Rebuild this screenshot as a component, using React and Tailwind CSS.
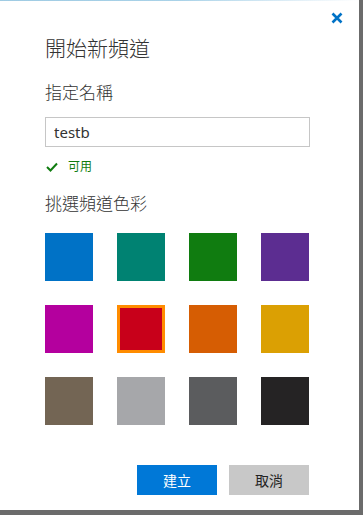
import React, { useState } from "react";

const colors = [
  "#0072c6",
  "#008272",
  "#107c10",
  "#5c2d91",
  "#b4009e",
  "#c8001a",
  "#d65d03",
  "#dba003",
  "#736554",
  "#a6a7aa",
  "#5b5c5e",
  "#252324",
];

const font = {
  fontFamily: "'Noto Sans', 'Noto Sans CJK TC', sans-serif",
};

const App = () => {
  const [name, setName] = useState("testb");
  const [selected, setSelected] = useState(5);

  return (
    <div className="w-[363px] h-[515px] bg-[#6b6b6b]" style={font}>
      <div className="w-[359px] h-[510px] bg-white flex flex-col">
        {/* top accent line */}
        <div className="h-px bg-gradient-to-r from-[#9fcbe3] via-[#a9d2e8] to-white" />

        <div className="flex justify-end pr-[15px] pt-[10px]">
          {/* Close */}
          <button className="w-[14px] h-[14px] flex items-center justify-center">
            <svg viewBox="0 0 12 12" className="w-[12px] h-[12px]">
              <path
                d="M1.5 1.5 L10.5 10.5 M10.5 1.5 L1.5 10.5"
                stroke="#0072c6"
                strokeWidth="2.6"
                strokeLinecap="butt"
              />
            </svg>
          </button>
        </div>

        <div className="pl-[45px] pr-[49px]">
          <h1 className="text-[21px] leading-[28px] text-[#333] font-light mt-[9px]">
            開始新頻道
          </h1>

          <div className="text-[17px] leading-[22px] text-[#333] font-light mt-[20px]">
            指定名稱
          </div>

          <input
            value={name}
            onChange={(e) => setName(e.target.value)}
            className="mt-[13px] w-[265px] h-[30px] border border-[#c6c6c6] px-[8px] text-[15px] text-[#333] outline-none"
          />

          <div className="flex items-center gap-[10px] mt-[10px] h-[20px]">
            <svg viewBox="0 0 12 10" className="w-[12px] h-[10px] ml-px">
              <path
                d="M1 5 L4.5 8.5 L11 1.5"
                fill="none"
                stroke="#107c10"
                strokeWidth="2"
              />
            </svg>
            <span className="text-[12px] text-[#107c10]">可用</span>
          </div>

          <div className="text-[17px] leading-[22px] text-[#333] font-light mt-[16px]">
            挑選頻道色彩
          </div>

          {/* colour grid */}
          <div className="grid grid-cols-[repeat(4,48px)] gap-[24px] mt-[18px]">
            {colors.map((c, i) => (
              <button
                key={c}
                onClick={() => setSelected(i)}
                className={`w-[48px] h-[48px] ${
                  selected === i ? "border-[3px] border-[#ff8c00]" : ""
                }`}
                style={{ backgroundColor: c }}
              />
            ))}
          </div>

          {/* buttons */}
          <div className="flex justify-end gap-[12px] mt-[40px] w-[264px]">
            <button className="w-[80px] h-[30px] bg-[#0078d7] text-white text-[14px]">
              建立
            </button>
            <button className="w-[80px] h-[30px] bg-[#c8c8c8] text-[#222] text-[14px]">
              取消
            </button>
          </div>
        </div>
      </div>
    </div>
  );
};

export default App;
